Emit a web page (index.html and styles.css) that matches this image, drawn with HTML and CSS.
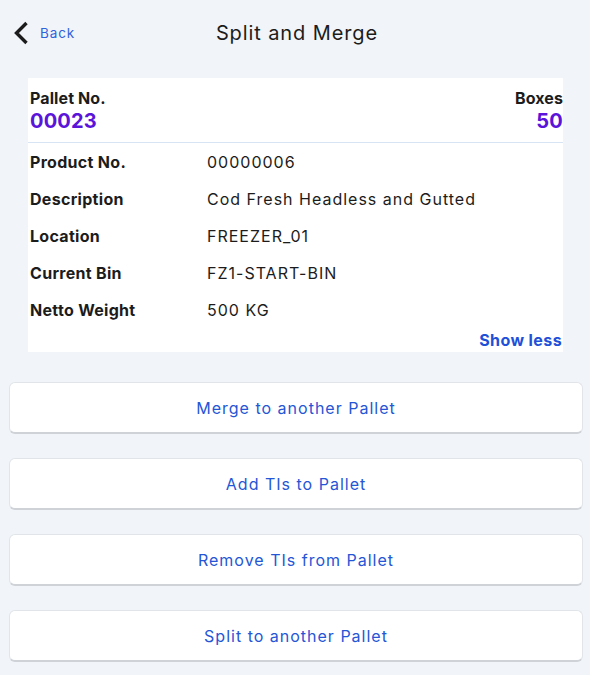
FILE: index.html
```html
<!DOCTYPE html>
<html>
<head>
<meta charset="utf-8">
<link rel="stylesheet" href="styles.css">
</head>
<body>
<div class="page">
  <header class="topbar">
    <a class="back">
      <svg class="chev" width="16" height="24" viewBox="0 0 16 24"><path d="M13.5 2 L3.5 12 L13.5 22" fill="none" stroke="#1c1c1c" stroke-width="3.4" stroke-linecap="butt" stroke-linejoin="miter"/></svg>
      <span class="back-text">Back</span>
    </a>
    <h1 class="title">Split and Merge</h1>
  </header>

  <section class="card">
    <div class="card-head">
      <div class="head-col">
        <div class="head-label">Pallet No.</div>
        <div class="head-value">00023</div>
      </div>
      <div class="head-col right">
        <div class="head-label">Boxes</div>
        <div class="head-value">50</div>
      </div>
    </div>
    <div class="rows">
      <div class="row"><div class="lbl">Product No.</div><div class="val">00000006</div></div>
      <div class="row"><div class="lbl">Description</div><div class="val">Cod Fresh Headless and Gutted</div></div>
      <div class="row"><div class="lbl">Location</div><div class="val">FREEZER_01</div></div>
      <div class="row"><div class="lbl">Current Bin</div><div class="val">FZ1-START-BIN</div></div>
      <div class="row"><div class="lbl">Netto Weight</div><div class="val">500 KG</div></div>
    </div>
    <div class="toggle">Show less</div>
  </section>

  <div class="actions">
    <button class="action">Merge to another Pallet</button>
    <button class="action">Add TIs to Pallet</button>
    <button class="action">Remove TIs from Pallet</button>
    <button class="action">Split to another Pallet</button>
  </div>
</div>
</body>
</html>
```
FILE: styles.css
```css
* { box-sizing: border-box; }
html, body { margin: 0; padding: 0; }
body {
  background: #f1f4f8;
  font-family: Inter, "Noto Sans", sans-serif;
  color: #1c1c1c;
}
.page { width: 590px; }

.topbar {
  height: 66px;
  display: flex;
  align-items: center;
  position: relative;
  padding-left: 13px;
}
.back {
  display: flex;
  align-items: center;
  gap: 11px;
  color: #2f62dd;
}
.chev { display: block; }
.back-text { font-size: 13.5px; letter-spacing: 0.9px; }
.title {
  position: absolute;
  left: 0; right: 0;
  text-align: center;
  margin: 0;
  padding-left: 4px;
  font-size: 20px;
  font-weight: 400;
  letter-spacing: 0.9px;
  pointer-events: none;
}

.card {
  margin: 12px 27px 0 28px;
  background: #ffffff;
  padding: 0 1px 0 2px;
}
.card-head {
  display: flex;
  justify-content: space-between;
  padding: 10px 0 8px 2px;
  border-bottom: 1px solid #d7e4f4;
  margin: 0 -1px 0 -2px;
}
.head-col.right { text-align: right; }
.head-label { font-size: 16px; font-weight: 700; line-height: 20px; letter-spacing: 0.1px; }
.head-value { font-size: 20px; font-weight: 700; color: #5a14da; line-height: 26px; letter-spacing: 0.2px; }

.rows { padding-top: 0; }
.row {
  display: flex;
  height: 37px;
  align-items: center;
  font-size: 16px;
}
.lbl { width: 177px; font-weight: 700; letter-spacing: 0.3px; }
.val { font-weight: 400; letter-spacing: 1px; }

.toggle {
  text-align: right;
  color: #1e50d8;
  font-weight: 700;
  font-size: 16px;
  line-height: 20px;
  letter-spacing: 0.4px;
  padding: 2px 0 2px 0;
}

.actions {
  display: flex;
  flex-direction: column;
  gap: 24px;
  padding: 30px 7px 0 9px;
}
.action {
  height: 52px;
  background: #ffffff;
  border: 1px solid #e1e4e8;
  border-bottom: 2px solid #cfd3d8;
  border-radius: 6px;
  font-family: inherit;
  font-size: 16px;
  letter-spacing: 1px;
  color: #2456d6;
  cursor: pointer;
}
```
